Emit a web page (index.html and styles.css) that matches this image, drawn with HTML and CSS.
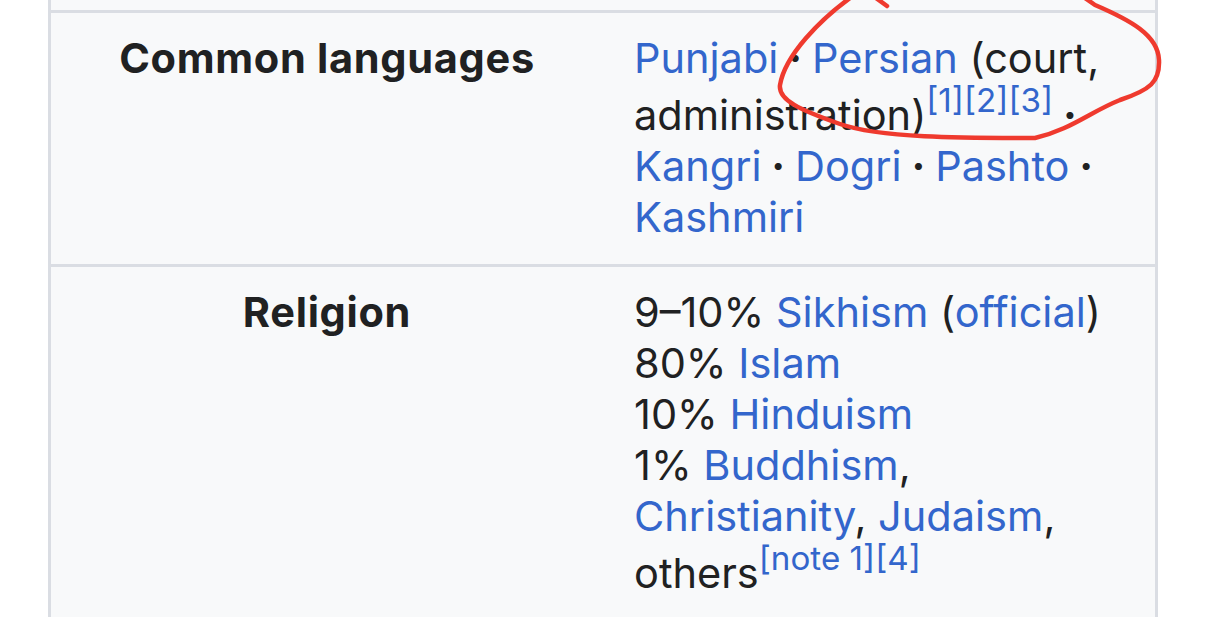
FILE: index.html
```html
<!DOCTYPE html>
<html lang="en">
<head>
    <meta charset="UTF-8">
    <meta name="viewport" content="width=device-width, initial-scale=1.0">
    <title>Infobox</title>
    <link rel="stylesheet" href="styles.css">
</head>
<body>
    <div class="infobox">
        <div class="infobox-row">
            <div class="infobox-label">Common languages</div>
            <div class="infobox-data">
                <ul class="hlist">
                    <li><a href="#">Punjabi</a></li>
                    <li><a href="#">Persian</a> (court, administration)<sup class="reference"><a href="#">[1]</a><a href="#">[2]</a><a href="#">[3]</a></sup></li>
                    <li><a href="#">Kangri</a></li>
                    <li><a href="#">Dogri</a></li>
                    <li><a href="#">Pashto</a></li>
                    <li><a href="#">Kashmiri</a></li>
                </ul>
            </div>
        </div>
        <div class="infobox-row">
            <div class="infobox-label">Religion</div>
            <div class="infobox-data">
                9–10% <a href="#">Sikhism</a> (<a href="#">official</a>)<br>
                80% <a href="#">Islam</a><br>
                10% <a href="#">Hinduism</a><br>
                1% <a href="#">Buddhism</a>, <a href="#">Christianity</a>, <a href="#">Judaism</a>, others<sup class="reference"><a href="#">[note 1]</a><a href="#">[4]</a></sup>
            </div>
        </div>
    </div>

    <!-- hand-drawn annotation -->
    <svg class="scribble" width="1206" height="617" viewBox="0 0 1206 617">
        <path d="M 850 -2 C 820 20, 785 55, 780 85 C 778 100, 800 110, 840 124 C 880 138, 960 138, 1035 138 C 1070 130, 1090 112, 1120 100 C 1150 90, 1160 82, 1159 60 C 1158 35, 1130 20, 1095 5 L 1085 -2" />
        <path d="M 876 -2 L 887 6" />
    </svg>
</body>
</html>
```

FILE: styles.css
```css
body {
    margin: 0;
    padding: 0;
    background: #ffffff;
    font-family: Inter, "Noto Sans", sans-serif;
    color: #202122;
    overflow: hidden;
}

a {
    color: #3366cc;
    text-decoration: none;
}

.infobox {
    margin-left: 48px;
    width: 1104px;
    padding-top: 10px;
    background: #f8f9fa;
    border-left: 3px solid #dadde3;
    border-right: 3px solid #dadde3;
    font-size: 41.5px;
    line-height: 51px;
}

.infobox-row {
    display: grid;
    grid-template-columns: 552px 1fr;
    border-top: 3px solid #dadde3;
}

.infobox-label {
    padding: 20px 10px 21px;
    text-align: center;
    font-weight: bold;
    letter-spacing: 0.7px;
}

.infobox-data {
    padding: 20px 20px 21px 31px;
}

/* Horizontal list with dots */
.hlist {
    margin: 0;
    padding: 0;
    list-style: none;
}

.hlist li {
    display: inline;
}

.hlist li:after {
    content: " · ";
    font-weight: bold;
}

.hlist li:last-child:after {
    content: none;
}

.reference {
    font-size: 0.8em;
    line-height: 1;
    vertical-align: 0.55em;
}

.scribble {
    position: absolute;
    top: 0;
    left: 0;
    pointer-events: none;
}

.scribble path {
    fill: none;
    stroke: #ef3a2e;
    stroke-width: 4.5;
    stroke-linecap: round;
    stroke-linejoin: round;
}
```
